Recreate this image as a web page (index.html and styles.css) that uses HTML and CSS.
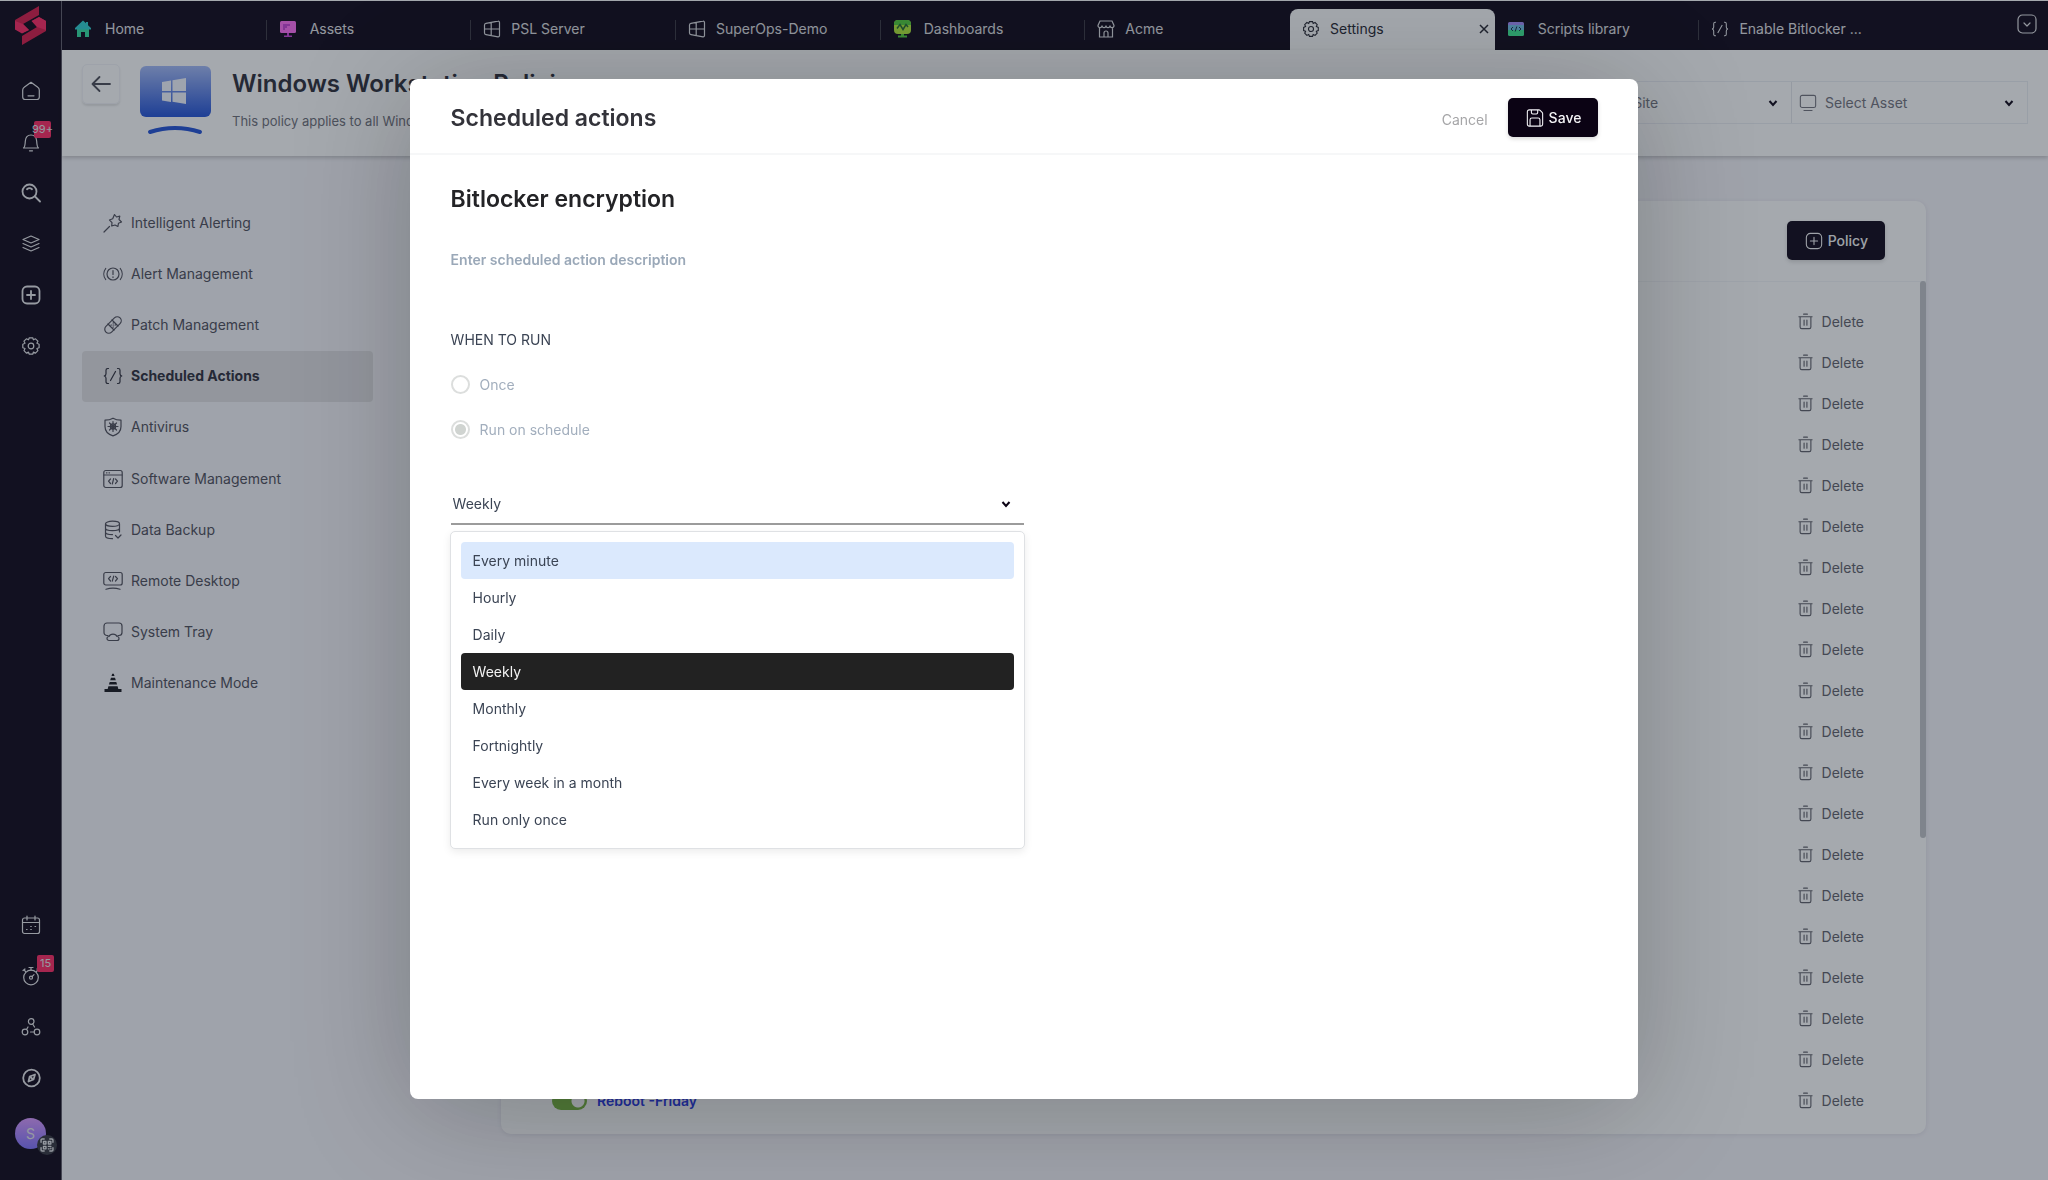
FILE: index.html
```html
<!DOCTYPE html>
<html lang="en">
<head>
    <meta charset="UTF-8">
    <meta name="viewport" content="width=device-width, initial-scale=1.0">
    <title>Windows Workstation Policies</title>
    <link rel="stylesheet" href="styles.css">
</head>
<body>
    <!-- Shared icons -->
    <svg class="sprite" aria-hidden="true">
        <symbol id="i-trash" viewBox="0 0 18 18"><path d="M2 4h14M7 1.200h4M3.300 4.200v10.600a1.700 1.700 0 0 0 1.700 1.700h8a1.700 1.700 0 0 0 1.700-1.700V4.200M7.500 7.500v5.500M10.500 7.500v5.500"/></symbol>
        <symbol id="i-chevron" viewBox="0 0 12 12"><path d="M2.500 4l3.500 4 3.500-4"/></symbol>
        <symbol id="i-window" viewBox="0 0 18 18"><path d="M3 3.300L15 1.200a1.200 1.200 0 0 1 1.500 1.200v13.200a1.200 1.200 0 0 1-1.500 1.200L3 14.700a1.800 1.800 0 0 1-1.500-1.700V5A1.800 1.800 0 0 1 3 3.300zM8.200 2.500v13M1.500 9h15"/></symbol>
        <symbol id="i-gear" viewBox="0 0 20 20"><path d="M8.300 1.800h3.400l.7 2 2.100-1 2.400 2.400-1 2.100 2.200.9v3.500l-2.200.8 1 2.200-2.400 2.400-2.100-1-.7 2.100H8.300l-.8-2.100-2.100 1L3 14.700l1-2.200-2.200-.8V8.200L4 7.300l-1-2.100 2.400-2.400 2.100 1z"/><circle cx="10" cy="10" r="2.800"/></symbol>
        <symbol id="i-plus-box" viewBox="0 0 20 20"><rect x="1.500" y="1.500" width="17" height="17" rx="4.500"/><path d="M10 6v8M6 10h8"/></symbol>
        <symbol id="i-braces" viewBox="0 0 20 20"><path d="M5.500 2.500H4.700A1.700 1.700 0 0 0 3 4.200v3.600C3 9 2.300 9.800 1.200 10 2.300 10.200 3 11 3 12.200v3.600a1.700 1.700 0 0 0 1.700 1.700h.8M14.500 2.500h.8A1.700 1.700 0 0 1 17 4.200v3.600c0 1.200.7 2 1.800 2.200-1.100.2-1.800 1-1.800 2.200v3.600a1.700 1.700 0 0 1-1.700 1.700h-.8M12.500 5.500l-5 9"/></symbol>
        <symbol id="i-monitor" viewBox="0 0 20 20"><rect x="1.500" y="1.500" width="17" height="13.500" rx="2"/><path d="M5.500 18.300h9"/></symbol>
    </svg>

    <div class="app">
        <nav class="rail" aria-label="Main">
            <a class="logo" href="#" aria-label="SuperOps">
                <svg viewBox="0 0 31 39">
                    <path fill="#d81647" d="M24 0v9L8 18l6 6-7 3-7-4V14z"/>
                    <path fill="#ff2461" d="M0 15l8 3 6 6-7 3.500-7-4z"/>
                    <path fill="#d81647" d="M24 11l7 4v10L7 39v-9l15-9-5-6z"/>
                    <path fill="#ff2461" d="M24 11l7 4v9l-9-3-5.500-6z"/>
                </svg>
            </a>
            <div class="rail-group">
                <a class="rail-link" href="#" aria-label="Home"><svg class="icon" viewBox="0 0 20 20"><path d="M10 1.300L3.200 6.300a3.500 3.500 0 0 0-1.500 2.800V16A2.500 2.500 0 0 0 4.200 18.500h11.600a2.500 2.500 0 0 0 2.500-2.500V9.100a3.500 3.500 0 0 0-1.500-2.800zM7 14.800h6"/></svg></a>
                <a class="rail-link" href="#" aria-label="Notifications"><svg class="icon" viewBox="0 0 20 20"><path d="M2.500 16c1.600-1.200 1.600-3.500 1.800-6.800.2-3.600 2.200-6.200 5.700-6.200s5.500 2.600 5.700 6.200c.2 3.300.2 5.600 1.800 6.800zM8.500 18.800h3"/></svg><span class="count">99+</span></a>
                <a class="rail-link strong" href="#" aria-label="Search"><svg class="icon" viewBox="0 0 20 20"><circle cx="8.500" cy="8.500" r="7"/><path d="M14 13.500l5 5M6 6.200c1.400-1.200 3.600-1.200 5 0"/></svg></a>
                <a class="rail-link" href="#" aria-label="Layers"><svg class="icon" viewBox="0 0 20 20"><path d="M10 2l8 3.500-8 3.500-8-3.500zM2 9.500l8 3.500 8-3.500M2 13.500l8 3.500 8-3.500"/></svg></a>
                <a class="rail-link strong" href="#" aria-label="Create"><svg class="icon"><use href="#i-plus-box"/></svg></a>
                <a class="rail-link" href="#" aria-label="Settings"><svg class="icon"><use href="#i-gear"/></svg></a>
            </div>
            <div class="rail-group">
                <a class="rail-link" href="#" aria-label="Calendar"><svg class="icon" viewBox="0 0 20 20"><rect x="1.500" y="3" width="17" height="15.500" rx="2"/><path d="M1.500 7.500h17M6 1v4M14 1v4M5.500 14.500h.6M9.700 11.500h.6M9.700 14.500h.6M14 11.500h.6"/></svg></a>
                <a class="rail-link" href="#" aria-label="Timer"><svg class="icon" viewBox="0 0 20 20"><circle cx="10" cy="11.500" r="7.300"/><circle cx="10" cy="11.700" r="1.500"/><path d="M11 10.700l2-2M10 4.200V1.500M8 1.500h4M2 4.500l2-1.500M3 3.700l1.500 2M18 4.500l-2-1.500M17 3.700l-1.500 2"/></svg><span class="count low">15</span></a>
                <a class="rail-link" href="#" aria-label="Integrations"><svg class="icon" viewBox="0 0 20 20"><circle cx="10.200" cy="4.500" r="2.800"/><circle cx="4" cy="15" r="2.800"/><circle cx="16" cy="15" r="2.800"/><path d="M11.700 7l1.800 3M5.500 12.500l1.500-2.500M9.500 15h3.500"/></svg></a>
                <a class="rail-link strong" href="#" aria-label="Explore"><svg class="icon" viewBox="0 0 20 20"><circle cx="10.500" cy="10" r="8.300"/><path d="M14 6.500l-1.500 5-5 2 1.200-5zM9 8.500l3 3"/></svg></a>
                <button class="avatar" type="button">S
                    <span class="qr"><svg class="icon" viewBox="0 0 20 20"><path d="M1.500 6V3A1.500 1.500 0 0 1 3 1.500h3M14 1.500h3A1.500 1.500 0 0 1 18.500 3v3M18.500 14v3a1.500 1.500 0 0 1-1.500 1.500h-3M6 18.500H3A1.500 1.500 0 0 1 1.500 17v-3M5 5h3.500v3.500H5zM12 5h3.500v3.500H12zM5 12h3.500v3.500H5zM12 12h3.500M12 15.500h1M15.500 14.500v1"/></svg></span>
                </button>
            </div>
        </nav>

        <div class="main">
            <div class="topbar">
                <nav class="tabs" aria-label="Open tabs">
                    <a class="tab wide" href="#"><svg class="tab-icon" viewBox="0 0 18 18"><path fill="#2fe0a0" d="M3 8h12v9h-4v-5H7v5H3z"/><path fill="#2bcfd0" d="M9 .5L1 8v1.500h16V8l-3-2.800V2h-2v1.300z"/></svg>Home</a>
                    <a class="tab wide" href="#"><svg class="tab-icon" viewBox="0 0 18 18"><rect x="1" y="1" width="16" height="12" rx="1.500" fill="#ff6bf5"/><path fill="#c63fd8" d="M8 13h2v2.500h3V17H5v-1.500h3zM4 4h7v2H8v2H6v2H4z"/></svg>Assets</a>
                    <a class="tab" href="#"><svg class="tab-icon line"><use href="#i-window"/></svg>PSL Server</a>
                    <a class="tab" href="#"><svg class="tab-icon line"><use href="#i-window"/></svg>SuperOps-Demo</a>
                    <a class="tab wide" href="#"><svg class="tab-icon" viewBox="0 0 18 18"><rect x="1" y="0" width="17" height="14" rx="4" fill="#b4ef34"/><path fill="#50d038" d="M1 5V4a4 4 0 0 1 4-4h9a4 4 0 0 1 4 4v1zM8 14h3v1.500h3V17.500H5v-2h3z"/><path fill="none" stroke="#1f6a2e" stroke-width="1.500" d="M4 8.500l3-4 3 5 3-5 2 2.500"/></svg>Dashboards</a>
                    <a class="tab" href="#"><svg class="tab-icon line" viewBox="0 0 18 18"><path d="M3 1h12l2 4.500c0 1.500-1 2.200-2 2.200s-2-.7-2-2.200c0 1.500-1 2.200-2 2.200S9 7 9 5.500C9 7 8 7.700 7 7.700S5 7 5 5.500C5 7 4 7.700 3 7.700S1 7 1 5.500zM2.500 8v9h13V8M7 17v-4a2 2 0 0 1 4 0v4"/></svg>Acme</a>
                    <a class="tab active" href="#"><svg class="tab-icon line"><use href="#i-gear"/></svg>Settings<svg class="close" viewBox="0 0 10 10"><path d="M1 1l8 8M9 1L1 9"/></svg></a>
                    <a class="tab wide" href="#"><svg class="tab-icon" viewBox="0 0 18 18"><path fill="#a58cff" d="M1 3.500A1.500 1.500 0 0 1 2.500 2h13A1.500 1.500 0 0 1 17 3.500V6H1z"/><path fill="#3bef94" d="M1 6h16v8.500a1.500 1.500 0 0 1-1.500 1.500h-13A1.500 1.500 0 0 1 1 14.500z"/><path fill="#6fc0e8" d="M1 5h16v5H1z"/><path fill="none" stroke="#12304a" d="M6 7L4 9l2 2M12 7l2 2-2 2M9.800 6.500l-1.600 5"/></svg>Scripts library</a>
                    <a class="tab" href="#"><svg class="tab-icon line"><use href="#i-braces"/></svg>Enable Bitlocker ...</a>
                </nav>
                <button class="more-tabs" type="button" aria-label="More tabs"><svg class="icon" viewBox="0 0 20 20"><rect x="1" y="1" width="18" height="18" rx="4.500"/><path d="M7 9l3 3 3-3"/></svg></button>
            </div>

            <header class="page-header">
                <button class="back" type="button" aria-label="Back"><svg class="icon" viewBox="0 0 20 20"><path d="M19 10H1.500M8.500 3l-7 7 7 7"/></svg></button>
                <svg class="os-badge" viewBox="0 0 71 71" aria-hidden="true">
                    <defs><linearGradient id="os-fill" x1="0" y1="0" x2="0" y2="1"><stop offset="0" stop-color="#a3b9f8"/><stop offset="1" stop-color="#1f4fd6"/></linearGradient></defs>
                    <rect x="0" y="0" width="71" height="51" rx="6" fill="url(#os-fill)"/>
                    <path fill="#f4f7ff" d="M22 16l9-1.500V25h-9zM32.500 14.300L46 12v13H32.500zM22 26.500h9V36l-9-1.500zM32.500 26.500H46V38l-13.500-2.200z"/>
                    <path d="M10 66q25-8 50 0" fill="none" stroke="#1f4fd6" stroke-width="4" stroke-linecap="round"/>
                </svg>
                <div class="heading">
                    <h1>Windows Workstation Policies</h1>
                    <p>This policy applies to all Windows workstations.</p>
                </div>
                <div class="filters">
                    <label class="filter"><svg class="icon"><use href="#i-monitor"/></svg><select aria-label="Site"><option>Select Site</option></select><svg class="chevron"><use href="#i-chevron"/></svg></label>
                    <label class="filter"><svg class="icon"><use href="#i-monitor"/></svg><select aria-label="Asset"><option>Select Asset</option></select><svg class="chevron"><use href="#i-chevron"/></svg></label>
                </div>
            </header>

            <div class="body">
                <nav class="side-nav" aria-label="Policy sections">
                    <a href="#"><svg class="icon" viewBox="0 0 20 20"><path d="M11.500 1.500l2 2.500 3.300-.8-.8 3.300 2.500 2.500-3 1.200-.6 3.300-2.900-1.500-3.300 1 .3-3.400L6.500 7l3.200-1.200zM1 19l5.500-5.500"/></svg>Intelligent Alerting</a>
                    <a href="#"><svg class="icon" viewBox="0 0 20 20"><circle cx="10" cy="10" r="6"/><path d="M10 6.500v4M10 12.800v.7M2.700 4.500a9 9 0 0 0 0 11M17.300 4.500a9 9 0 0 1 0 11"/></svg>Alert Management</a>
                    <a href="#"><svg class="icon" viewBox="0 0 20 20"><rect x="0" y="6" width="20" height="8" rx="4" transform="rotate(-45 10 10)"/><path d="M5 9l6 6M9 5l6 6M8 10h.5M10 8h.5M10 12h.5M12 10h.5M10 10h.5"/></svg>Patch Management</a>
                    <a href="#" class="current"><svg class="icon"><use href="#i-braces"/></svg>Scheduled Actions</a>
                    <a href="#"><svg class="icon" viewBox="0 0 20 20"><path d="M10 1.200c2.500 1.500 5 2 8 2v6.300c0 5-3.500 8-8 9.300-4.500-1.300-8-4.300-8-9.300V3.200c3 0 5.500-.5 8-2z"/><circle cx="10" cy="9.500" r="2.600"/><path d="M10 4.500v10M5 9.500h10M6.500 6l7 7M13.500 6l-7 7"/></svg>Antivirus</a>
                    <a href="#"><svg class="icon" viewBox="0 0 20 20"><rect x=".8" y="1.500" width="18.400" height="17" rx="2"/><path d="M1 6h18M3.500 3.800h.5M6 3.800h.5M7.500 10l-2 2.200 2 2.300M12.500 10l2 2.200-2 2.300M10.700 9.500l-1.400 5.500"/></svg>Software Management</a>
                    <a href="#"><svg class="icon" viewBox="0 0 20 20"><ellipse cx="9.500" cy="3.800" rx="7" ry="2.600"/><path d="M2.500 4v12c0 1.500 3 2.700 7 2.700M16.500 4v8M2.500 8c0 1.500 3 2.600 7 2.600s7-1.100 7-2.600M2.500 12c0 1.500 3 2.600 7 2.600M12.500 15.500l2.500 2.500 3-3"/></svg>Data Backup</a>
                    <a href="#"><svg class="icon" viewBox="0 0 20 20"><rect x=".8" y="1.500" width="18.400" height="12.500" rx="2"/><path d="M3 18.300q7-2.200 14 0M7.500 5.500l-2 2.200 2 2.300M12.500 5.500l2 2.200-2 2.300M10.700 5.200l-1.400 5"/></svg>Remote Desktop</a>
                    <a href="#"><svg class="icon" viewBox="0 0 20 20"><path d="M5 13.500H4a3 3 0 0 1-3-3V4a3 3 0 0 1 3-3h12a3 3 0 0 1 3 3v6.500a3 3 0 0 1-3 3h-1M6 18.500a2 2 0 0 1 0-4q1-2.300 4-2.300t4 2.300a2 2 0 0 1 0 4z"/></svg>System Tray</a>
                    <a href="#"><svg class="icon cone" viewBox="0 0 20 20"><path d="M9.200.8h1.600L11.500 3h-3zM8 4.800h4l.8 2.500H7.200zM6.700 9h6.600l.8 2.500H5.900zM5.400 13.200h9.200l.7 2.800H18.500v3h-17v-3h3.200z"/></svg>Maintenance Mode</a>
                </nav>

                <section class="card">
                    <div class="card-head">
                        <button class="btn" type="button"><svg class="icon"><use href="#i-plus-box"/></svg>Policy</button>
                    </div>
                    <ul class="rows">
                        <li><button type="button"><svg class="icon"><use href="#i-trash"/></svg>Delete</button></li>
                        <li><button type="button"><svg class="icon"><use href="#i-trash"/></svg>Delete</button></li>
                        <li><button type="button"><svg class="icon"><use href="#i-trash"/></svg>Delete</button></li>
                        <li><button type="button"><svg class="icon"><use href="#i-trash"/></svg>Delete</button></li>
                        <li><button type="button"><svg class="icon"><use href="#i-trash"/></svg>Delete</button></li>
                        <li><button type="button"><svg class="icon"><use href="#i-trash"/></svg>Delete</button></li>
                        <li><button type="button"><svg class="icon"><use href="#i-trash"/></svg>Delete</button></li>
                        <li><button type="button"><svg class="icon"><use href="#i-trash"/></svg>Delete</button></li>
                        <li><button type="button"><svg class="icon"><use href="#i-trash"/></svg>Delete</button></li>
                        <li><button type="button"><svg class="icon"><use href="#i-trash"/></svg>Delete</button></li>
                        <li><button type="button"><svg class="icon"><use href="#i-trash"/></svg>Delete</button></li>
                        <li><button type="button"><svg class="icon"><use href="#i-trash"/></svg>Delete</button></li>
                        <li><button type="button"><svg class="icon"><use href="#i-trash"/></svg>Delete</button></li>
                        <li><button type="button"><svg class="icon"><use href="#i-trash"/></svg>Delete</button></li>
                        <li><button type="button"><svg class="icon"><use href="#i-trash"/></svg>Delete</button></li>
                        <li><button type="button"><svg class="icon"><use href="#i-trash"/></svg>Delete</button></li>
                        <li><button type="button"><svg class="icon"><use href="#i-trash"/></svg>Delete</button></li>
                        <li><button type="button"><svg class="icon"><use href="#i-trash"/></svg>Delete</button></li>
                        <li><button type="button"><svg class="icon"><use href="#i-trash"/></svg>Delete</button></li>
                        <li>
                            <input class="toggle" type="checkbox" checked aria-label="Reboot -Friday enabled">
                            <a href="#">Reboot -Friday</a>
                            <button type="button"><svg class="icon"><use href="#i-trash"/></svg>Delete</button>
                        </li>
                    </ul>
                    <span class="scroll-thumb"></span>
                </section>
            </div>
        </div>
    </div>

    <div class="backdrop">
        <form class="modal" role="dialog" aria-labelledby="modal-title">
            <div class="modal-head">
                <h2 id="modal-title">Scheduled actions</h2>
                <button class="cancel" type="button">Cancel</button>
                <button class="btn" type="button"><svg class="icon" viewBox="0 0 20 20"><path d="M3.500 1h10.800a2 2 0 0 1 1.400.6l2.200 2.200a2 2 0 0 1 .6 1.400V17a2 2 0 0 1-2 2h-13a2 2 0 0 1-2-2V3a2 2 0 0 1 2-2zM6 1v3a1.500 1.500 0 0 0 1.500 1.500h4A1.500 1.500 0 0 0 13 4V1M4.500 19v-7A2 2 0 0 1 6.500 10h7a2 2 0 0 1 2 2v7"/></svg>Save</button>
            </div>
            <div class="modal-body">
                <input class="name-input" type="text" value="Bitlocker encryption" aria-label="Name">
                <input class="desc-input" type="text" placeholder="Enter scheduled action description" aria-label="Description">

                <fieldset class="when">
                    <legend>WHEN TO RUN</legend>
                    <label class="choice"><input type="radio" name="when" disabled>Once</label>
                    <label class="choice"><input type="radio" name="when" checked disabled>Run on schedule</label>
                </fieldset>

                <div class="frequency">
                    <select aria-label="Frequency">
                        <option>Weekly</option>
                    </select>
                    <svg class="chevron"><use href="#i-chevron"/></svg>
                    <ul class="menu" role="listbox" aria-label="Frequency">
                        <li class="hover" role="option">Every minute</li>
                        <li role="option">Hourly</li>
                        <li role="option">Daily</li>
                        <li class="selected" role="option" aria-selected="true">Weekly</li>
                        <li role="option">Monthly</li>
                        <li role="option">Fortnightly</li>
                        <li role="option">Every week in a month</li>
                        <li role="option">Run only once</li>
                    </ul>
                </div>
            </div>
        </form>
    </div>
</body>
</html>
```

FILE: styles.css
```css
* {
    box-sizing: border-box;
}
body {
    margin: 0;
    font-family: Inter, "Liberation Sans", sans-serif;
    font-size: 14px;
    line-height: 20px;
    color: #3b4454;
    background: #f6f5fa;
    overflow: hidden;
}
a {
    color: inherit;
    text-decoration: none;
}
button, input, select {
    font: inherit;
    color: inherit;
    border: none;
    background: none;
    padding: 0;
    margin: 0;
}
ul {
    list-style: none;
    margin: 0;
    padding: 0;
}
.sprite {
    position: absolute;
    width: 0;
    height: 0;
}
.icon {
    width: 20px;
    height: 20px;
    flex: none;
    fill: none;
    stroke: currentColor;
    stroke-width: 1.2;
    stroke-linecap: round;
    stroke-linejoin: round;
}
.chevron {
    width: 12px;
    height: 12px;
    fill: none;
    stroke: #0b0314;
    stroke-width: 2;
}
.app {
    display: flex;
    height: 100vh;
    border-top: 1px solid #fff;
}

/* Left rail */
.rail {
    width: 62px;
    flex: none;
    display: flex;
    flex-direction: column;
    background: #0b0314;
    border-right: 1px solid #5f5b68;
    color: #e6e6ea;
}
.logo {
    padding: 5px 0 0 15px;
    height: 64px;
}
.logo svg {
    width: 31px;
    height: 39px;
}
.rail-group:last-child {
    margin-top: auto;
    padding-bottom: 31px;
}
.rail-link {
    height: 51px;
    display: flex;
    align-items: center;
    justify-content: center;
    position: relative;
}
.rail-link.strong .icon {
    stroke-width: 1.8;
}
.count {
    position: absolute;
    top: 5px;
    left: 34px;
    width: 17px;
    height: 17px;
    border-radius: 2px;
    background: #ff2562;
    color: #e6e6ea;
    font-size: 11px;
    line-height: 17px;
    display: flex;
    justify-content: center;
}
.count.low {
    left: 37px;
}
.avatar {
    display: block;
    width: 31px;
    height: 31px;
    margin: 15px 15px 0;
    border-radius: 50%;
    background: linear-gradient(#d896ff, #7f71ff);
    position: relative;
    color: #e6e6ea;
}
.qr {
    position: absolute;
    left: 22px;
    top: 17px;
    width: 20px;
    height: 20px;
    border-radius: 50%;
    background: #33333d;
    display: grid;
    place-items: center;
}
.qr .icon {
    width: 14px;
    height: 14px;
    stroke-width: 2;
}

/* Tabs */
.main {
    flex: 1;
    min-width: 0;
}
.topbar {
    height: 49px;
    display: flex;
    background: #0b0314;
    color: #e2e2e6;
}
.tabs {
    flex: 1;
    display: flex;
    padding-top: 8px;
}
.tab {
    flex: 1;
    display: flex;
    align-items: center;
    gap: 10px;
    padding: 0 6px 1px 12px;
    white-space: nowrap;
    background: linear-gradient(#3a3640, #3a3640) right center / 1px 20px no-repeat;
}
.tab.wide {
    gap: 13px;
}
.tab:nth-child(6), .tab:last-child {
    background: none;
}
.tab.active {
    background: #fff;
    color: #22222c;
    border-radius: 8px 8px 0 0;
}
.tab-icon {
    width: 18px;
    height: 18px;
    flex: none;
}
.tab-icon.line {
    fill: none;
    stroke: currentColor;
    stroke-width: 1.2;
}
.close {
    width: 10px;
    height: 10px;
    margin-left: auto;
    stroke: currentColor;
    stroke-width: 1.5;
}
.more-tabs {
    width: 144px;
    padding: 13px 11px 0;
    display: flex;
    justify-content: flex-end;
}

/* Page header */
.page-header {
    height: 106px;
    display: flex;
    align-items: flex-start;
    padding: 14px 20px 0 20px;
    background: #fff;
    box-shadow: 0 2px 4px rgba(0, 0, 0, 0.2);
    position: relative;
}
.back {
    width: 38px;
    height: 40px;
    border-radius: 5px;
    border: 1px solid #f3f4f8;
    box-shadow: 0 2px 2px rgba(0, 0, 0, 0.1);
    color: #4a4a55;
    display: grid;
    place-items: center;
}
.back .icon {
    stroke-width: 1.8;
}
.os-badge {
    width: 71px;
    height: 71px;
    margin: 2px 21px 0 20px;
}
.heading h1 {
    margin: 5px 0 12px;
    font-size: 24px;
    line-height: 30px;
    font-weight: 600;
    color: #2a2a36;
}
.heading p {
    margin: 0;
    font-size: 13px;
    color: #6c6c76;
}
.filters {
    margin: 17px 0 0 auto;
    display: flex;
    border: 1px solid #eceef4;
}
.filter {
    width: 236px;
    height: 41px;
    display: flex;
    align-items: center;
    gap: 8px;
    padding: 0 12px 0 7px;
    color: #70707a;
}
.filter .icon {
    width: 18px;
    height: 18px;
}
.filter + .filter {
    border-left: 1px solid #e4e6ec;
}
.filter select {
    flex: 1;
    appearance: none;
}

/* Page body */
.body {
    display: flex;
    align-items: flex-start;
    padding: 41px 122px 0 20px;
}
.side-nav {
    width: 291px;
    height: 512px;
    flex: none;
    display: flex;
    flex-direction: column;
}
.side-nav a {
    flex: 1;
    display: flex;
    align-items: center;
    gap: 8px;
    padding-left: 21px;
    border-radius: 4px;
    color: #4b4b57;
}
.side-nav a.current {
    background: #e1dfe3;
    color: #2b2b38;
    font-weight: 700;
}
.side-nav .cone {
    fill: #14141c;
    stroke: none;
}
.card {
    flex: 1;
    margin: 4px 0 0 128px;
    background: #fff;
    border-radius: 10px;
    box-shadow: 0 1px 5px rgba(40, 40, 80, 0.1);
    position: relative;
}
.card-head {
    height: 81px;
    display: flex;
    align-items: center;
    justify-content: flex-end;
    padding: 0 41px 1px 0;
    border-bottom: 1px solid #f4f5f8;
}
.btn {
    height: 39px;
    padding: 0 17px 0 18px;
    display: flex;
    align-items: center;
    gap: 5px;
    border-radius: 5px;
    background: #0b0314;
    color: #f4f4f6;
    font-weight: 500;
    box-shadow: 0 2px 4px rgba(0, 0, 0, 0.15);
}
.btn .icon {
    width: 18px;
    height: 18px;
}
.rows {
    padding: 19px 62px 13px 51px;
}
.rows li {
    height: 41px;
    display: flex;
    align-items: center;
    gap: 10px;
}
.rows a {
    color: #2233de;
    font-weight: 600;
}
.rows button {
    margin-left: auto;
    display: flex;
    align-items: center;
    gap: 8px;
    color: #5e5e68;
}
.rows .icon {
    width: 17px;
    height: 17px;
}
.toggle {
    appearance: none;
    width: 35px;
    height: 18px;
    border-radius: 9px;
    background: #76b43c radial-gradient(circle at 26px 9px, #fff 6px, transparent 7px);
}
.scroll-thumb {
    position: absolute;
    right: 0;
    top: 80px;
    width: 6px;
    height: 557px;
    border-radius: 3px;
    background: #c0c2c6;
}

/* Modal */
.backdrop {
    position: fixed;
    inset: 0;
    display: flex;
    justify-content: center;
    padding: 79px 0 81px;
    background: rgba(31, 41, 52, 0.4);
}
.modal {
    width: 60%;
    background: #fff;
    border-radius: 8px;
    box-shadow: 0 10px 120px rgba(0, 0, 0, 0.24);
}
.modal-head {
    height: 76px;
    display: flex;
    align-items: center;
    padding: 3px 40px 0 41px;
    border-bottom: 2px solid #f6f7f8;
}
.modal-head h2 {
    margin: 0 auto 0 0;
    font-size: 23px;
    font-weight: 600;
    color: #33333a;
}
.cancel {
    margin: 4px 20px 0 0;
    color: #a6a6a8;
}
.modal-body {
    display: flex;
    flex-direction: column;
    padding: 28px 41px;
}
.name-input {
    height: 32px;
    font-size: 23px;
    font-weight: 600;
    color: #232326;
}
.desc-input {
    height: 24px;
    margin-top: 32px;
    font-weight: 600;
}
.desc-input::placeholder {
    color: #9aa8b8;
}
.when {
    border: none;
    margin: 59px 0 0;
    padding: 0;
}
.when legend {
    padding: 0;
    margin-bottom: 12px;
}
.choice {
    display: flex;
    align-items: center;
    gap: 10px;
    height: 45px;
    color: #a2aebd;
}
.choice input {
    appearance: none;
    width: 19px;
    height: 19px;
    border: 2px solid #dcdedd;
    border-radius: 50%;
}
.choice input:checked {
    background: radial-gradient(circle, #d0d4d1 5px, transparent 6px);
}
.frequency {
    width: 50%;
    display: grid;
    align-items: center;
    margin-top: 33px;
    position: relative;
    border-bottom: 2px solid #9b9b9b;
}
.frequency select {
    grid-area: 1 / 1;
    appearance: none;
    height: 38px;
    padding-left: 2px;
}
.frequency .chevron {
    grid-area: 1 / 1;
    justify-self: end;
    margin-right: 12px;
    pointer-events: none;
}
.menu {
    position: absolute;
    top: 46px;
    left: -1px;
    right: -1px;
    padding: 10px;
    background: #fff;
    border: 1px solid #dfe1e4;
    border-radius: 5px;
    box-shadow: 0 3px 8px rgba(0, 0, 0, 0.08);
}
.menu li {
    height: 37px;
    line-height: 37px;
    padding-left: 12px;
    border-radius: 4px;
}
.menu .hover {
    background: #dbe9fd;
}
.menu .selected {
    background: #222;
    color: #f4f4f4;
}
```
